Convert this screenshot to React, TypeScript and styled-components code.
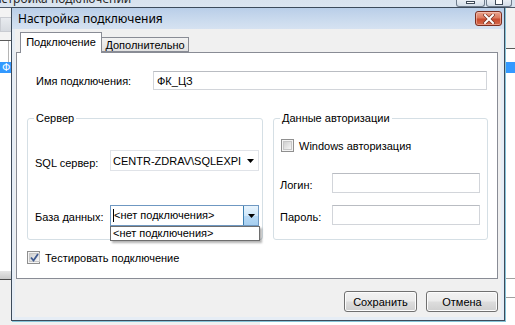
import React from "react";
import styled, { createGlobalStyle } from "styled-components";

const Global = createGlobalStyle`
  html, body { margin: 0; padding: 0; }
  body {
    width: 515px; height: 325px; overflow: hidden; background: #ececec;
    font-family: "Liberation Sans", Arial, sans-serif; font-size: 11px; color: #000;
  }
  * { box-sizing: border-box; }
`;

const Desktop = styled.div`
  position: relative;
  width: 515px;
  height: 325px;
  overflow: hidden;
  background: #ececec;
`;

/* ---------- background window ---------- */
const BackWindow = styled.div`
  position: absolute;
  inset: 0;
  display: flex;
  flex-direction: column;
`;

const BackTitle = styled.div`
  height: 8px;
  flex: none;
  display: flex;
  overflow: hidden;
  border-bottom: 1px solid #4d5867;
  background: linear-gradient(#d9e3ee, #dbe5f0);
`;

const BackTitleText = styled.div`
  font-family: "Noto Sans", sans-serif;
  font-size: 12px;
  line-height: 16px;
  margin-top: -9px;
  margin-left: -14px;
  color: #2a2a2a;
  white-space: nowrap;
`;

const CaptionButtons = styled.div`
  margin-left: auto;
  margin-right: 3px;
  display: flex;
  gap: 1px;
  height: 7px;
`;

const CaptionButton = styled.div<{ $w: number }>`
  width: ${(p) => p.$w}px;
  height: 7px;
  border: 1px solid #6f7c8c;
  border-top: none;
  border-radius: 0 0 3px 3px;
  background: linear-gradient(#e9eef4, #d3dde8);
  display: flex;
  justify-content: center;
  align-items: flex-start;
`;

const MinGlyph = styled.div`
  width: 9px;
  height: 3px;
  margin-top: 1px;
  background: #fff;
  border: 1px solid #3e4a58;
`;

const MaxGlyph = styled.div`
  width: 8px;
  height: 5px;
  border: 1px solid #3e4a58;
  border-top: none;
  background: #fff;
`;

const BackBody = styled.div`
  flex: 1;
  display: flex;
`;

const Pane = styled.div<{ $w?: number }>`
  ${(p) => (p.$w ? `width: ${p.$w}px; flex: none;` : "flex: 1;")}
  display: flex;
  flex-direction: column;
  background: #fff;
`;

const PaneToolbar = styled.div<{ $h: number }>`
  height: ${(p) => p.$h}px;
  flex: none;
  border-bottom: 1px solid #5a5a5a;
  background: #f3f3f3;
  display: flex;
  align-items: center;
`;

const ToolItem = styled.div`
  width: 12px;
  height: 15px;
  margin-top: 1px;
  border: 1px solid #c9ccd2;
  background: linear-gradient(#e8ebef, #d6dae0);
`;

const GridHeader = styled.div<{ $h: number }>`
  height: ${(p) => p.$h}px;
  flex: none;
  display: flex;
  background: #fff;
`;

const RowHeaderCell = styled.div`
  width: 9px;
  border-right: 1px solid #b5b5b5;
`;

const SelectedRow = styled.div`
  height: 11px;
  flex: none;
  background: #3399ff;
  color: #fff;
  font-size: 11px;
  line-height: 11px;
  padding-left: 2px;
  white-space: nowrap;
  overflow: hidden;
`;

const GridFill = styled.div`
  flex: 1;
  background: #fff;
`;

const HScroll = styled.div`
  height: 9px;
  flex: none;
  background: linear-gradient(#e6e6e6, #c9c9c9);
  border-bottom: 1px solid #4a4a4a;
`;

const GreyFill = styled.div<{ $h?: number }>`
  ${(p) => (p.$h ? `height: ${p.$h}px; flex: none;` : "flex: 1;")}
  background: #f0f0f0;
`;

const LinedRow = styled.div<{ $h: number }>`
  height: ${(p) => p.$h}px;
  flex: none;
  border-top: 1px solid #a0a0a0;
  background: #fff;
  padding-left: 1px;
  font-size: 11px;
  line-height: 14px;
  white-space: nowrap;
  overflow: hidden;
`;

/* ---------- dialog ---------- */
const Dialog = styled.div`
  position: absolute;
  left: 11px;
  top: 7px;
  width: 494px;
  height: 314px;
  border: 1px solid #3d4b5b;
  box-shadow: 1px 1px 0 #86c3d8;
  background: #e6edf5;
  display: flex;
  flex-direction: column;
`;

const TitleBar = styled.div`
  height: 21px;
  flex: none;
  display: flex;
  align-items: center;
  padding-left: 6px;
  padding-right: 2px;
  background: linear-gradient(#b9cee8, #cbdbee 60%, #d6e2f1);
`;

const TitleText = styled.div`
  font-family: "Noto Sans", sans-serif;
  font-size: 12px;
  color: #000;
  flex: 1;
`;

const CloseButton = styled.div`
  width: 27px;
  height: 15px;
  border: 1px solid #7a2e20;
  border-radius: 3px;
  background: linear-gradient(#e9a58f, #dc7a5e 45%, #c84a2e 55%, #d46a4c);
  display: flex;
  align-items: center;
  justify-content: center;
  box-shadow: inset 0 0 0 1px rgba(255, 210, 200, 0.5);
`;

const Client = styled.div`
  flex: 1;
  margin: 0 3px 3px 3px;
  background: #f0f0f0;
  display: flex;
  flex-direction: column;
`;

const TabStrip = styled.div`
  margin-top: 3px;
  margin-left: 5px;
  height: 20px;
  display: flex;
  align-items: flex-end;
  position: relative;
  z-index: 1;
`;

const Tab = styled.div<{ $active?: boolean; $w: number }>`
  width: ${(p) => p.$w}px;
  height: ${(p) => (p.$active ? 21 : 15)}px;
  border: 1px solid #898c95;
  border-bottom: ${(p) => (p.$active ? "none" : "1px solid #898c95")};
  ${(p) => (!p.$active ? "border-left: none;" : "margin-bottom: -1px;")}
  background: ${(p) => (p.$active ? "#fff" : "linear-gradient(#f2f2f2, #e1e1e1)")};
  display: flex;
  align-items: center;
  justify-content: center;
  padding-bottom: ${(p) => (p.$active ? 2 : 0)}px;
  font-size: 11px;
  white-space: nowrap;
`;

const TabPanel = styled.div`
  margin-left: 1px;
  width: 482px;
  height: 227px;
  border: 1px solid #898c95;
  background: #fff;
  display: flex;
  flex-direction: column;
`;

const NameRow = styled.div`
  margin-top: 18px;
  padding-left: 19px;
  display: flex;
  align-items: center;
`;

const Label = styled.div<{ $w: number; $dy?: number }>`
  width: ${(p) => p.$w}px;
  flex: none;
  font-size: 11px;
  white-space: nowrap;
  position: relative;
  top: ${(p) => p.$dy ?? 0}px;
`;

const TextBox = styled.div<{ $w: number; $h?: number }>`
  width: ${(p) => p.$w}px;
  height: ${(p) => p.$h ?? 20}px;
  border: 1px solid #d2d5da;
  border-top-color: #b9bcc2;
  background: #fff;
  font-size: 11px;
  display: flex;
  align-items: center;
  padding-left: 3px;
`;

const GroupsRow = styled.div`
  margin-top: 21px;
  margin-left: 10px;
  display: flex;
  gap: 10px;
`;

const Group = styled.fieldset<{ $w: number }>`
  width: ${(p) => p.$w}px;
  height: 129px;
  margin: 0;
  padding: 0;
  min-width: 0;
  border: 1px solid #d5dfe5;
  border-radius: 3px;
  display: flex;
  flex-direction: column;
`;

const Legend = styled.legend`
  margin-left: 6px;
  padding: 0 2px;
  font-size: 11px;
  line-height: 14px;
`;

const FieldRow = styled.div<{ $mt: number; $pl: number }>`
  margin-top: ${(p) => p.$mt}px;
  padding-left: ${(p) => p.$pl}px;
  display: flex;
  align-items: center;
`;

const Combo = styled.div<{ $w: number; $focused?: boolean }>`
  position: relative;
  width: ${(p) => p.$w}px;
  height: 21px;
  border: 1px solid ${(p) => (p.$focused ? "#6f98c2" : "#e0e3e8")};
  background: #fff;
  display: flex;
  align-items: center;
  font-size: 11px;
`;

const ComboText = styled.div`
  flex: 1;
  padding-left: 2px;
  white-space: nowrap;
  overflow: hidden;
`;

const Caret = styled.span`
  display: inline-block;
  width: 1px;
  height: 13px;
  background: #000;
  vertical-align: middle;
`;

const ArrowPlain = styled.div`
  width: 16px;
  height: 19px;
  display: flex;
  align-items: center;
  justify-content: center;
`;

const ArrowButton = styled.div`
  width: 15px;
  height: 19px;
  border-left: 1px solid #3c7fb1;
  background: linear-gradient(#e8f4fd, #cfe7fa 50%, #b7d9f6 52%, #a7cfef);
  display: flex;
  align-items: center;
  justify-content: center;
`;

const DropList = styled.div`
  position: absolute;
  left: -1px;
  top: 20px;
  width: 150px;
  height: 15px;
  border: 1px solid #6e6e6e;
  background: #fff;
  box-shadow: 2px 2px 2px rgba(0, 0, 0, 0.3);
  padding-left: 2px;
  font-size: 11px;
  line-height: 13px;
  white-space: nowrap;
  z-index: 5;
`;

const CheckRow = styled.label<{ $mt: number; $pl: number }>`
  margin-top: ${(p) => p.$mt}px;
  padding-left: ${(p) => p.$pl}px;
  display: flex;
  align-items: center;
  gap: 5px;
  font-size: 11px;
  white-space: nowrap;
`;

const CheckBox = styled.div`
  width: 13px;
  height: 13px;
  flex: none;
  border: 1px solid #8f8f8f;
  background: #f4f4f4;
  padding: 1px;
  display: flex;
`;

const CheckInner = styled.div`
  flex: 1;
  border: 1px solid #c7c7c7;
  background: linear-gradient(135deg, #cfcfcf, #f6f6f6);
  display: flex;
  align-items: center;
  justify-content: center;
`;

const ButtonRow = styled.div`
  margin-top: 12px;
  margin-right: 3px;
  display: flex;
  justify-content: flex-end;
  gap: 9px;
`;

const Button = styled.div<{ $w: number }>`
  width: ${(p) => p.$w}px;
  height: 21px;
  border: 1px solid #707070;
  border-radius: 3px;
  background: linear-gradient(#f2f2f2, #ebebeb 48%, #dddddd 52%, #cfcfcf);
  box-shadow: inset 0 0 0 1px #fcfcfc;
  display: flex;
  align-items: center;
  justify-content: center;
  font-size: 11px;
`;

const Arrow = () => (
  <svg width="7" height="4" viewBox="0 0 7 4">
    <path d="M0 0H7L3.5 4Z" fill="#000" />
  </svg>
);

const Check = () => (
  <svg width="9" height="9" viewBox="0 0 9 9">
    <path d="M1 4.5L3.5 7.5L8 1" fill="none" stroke="#3f5a90" strokeWidth="1.8" />
  </svg>
);

const CloseX = () => (
  <svg width="12" height="10" viewBox="0 0 12 10">
    <path d="M2 1L10 9M10 1L2 9" stroke="#7a3526" strokeWidth="3.4" strokeLinecap="square" />
    <path d="M2 1L10 9M10 1L2 9" stroke="#fff" strokeWidth="2" strokeLinecap="square" />
  </svg>
);

export default function App() {
  return (
    <>
      <Global />
      <Desktop>
        <BackWindow>
          <BackTitle>
            <BackTitleText>Настройка подключений</BackTitleText>
            <CaptionButtons>
              <CaptionButton $w={29}>
                <MinGlyph />
              </CaptionButton>
              <CaptionButton $w={26}>
                <MaxGlyph />
              </CaptionButton>
            </CaptionButtons>
          </BackTitle>
          <BackBody>
            <Pane $w={260}>
              <PaneToolbar $h={33}>
                <ToolItem />
              </PaneToolbar>
              <GridHeader $h={21}>
                <RowHeaderCell />
              </GridHeader>
              <SelectedRow>Ф</SelectedRow>
              <GridFill />
              <HScroll />
              <GreyFill $h={45} />
            </Pane>
            <Pane>
              <PaneToolbar $h={41} />
              <GridHeader $h={13} />
              <SelectedRow>...</SelectedRow>
              <GridFill />
              <LinedRow $h={19} />
              <LinedRow $h={28}>на</LinedRow>
            </Pane>
          </BackBody>
        </BackWindow>

        <Dialog>
          <TitleBar>
            <TitleText>Настройка подключения</TitleText>
            <CloseButton>
              <CloseX />
            </CloseButton>
          </TitleBar>
          <Client>
            <TabStrip>
              <Tab $active $w={82}>Подключение</Tab>
              <Tab $w={87}>Дополнительно</Tab>
            </TabStrip>
            <TabPanel>
              <NameRow>
                <Label $w={117}>Имя подключения:</Label>
                <TextBox $w={334} $h={19}>ФК_ЦЗ</TextBox>
              </NameRow>
              <GroupsRow>
                <Group $w={236}>
                  <Legend>Сервер</Legend>
                  <FieldRow $mt={25} $pl={7}>
                    <Label $w={75} $dy={2}>SQL сервер:</Label>
                    <Combo $w={149}>
                      <ComboText>CENTR-ZDRAV\SQLEXPI</ComboText>
                      <ArrowPlain>
                        <Arrow />
                      </ArrowPlain>
                    </Combo>
                  </FieldRow>
                  <FieldRow $mt={34} $pl={7}>
                    <Label $w={75} $dy={1}>База данных:</Label>
                    <Combo $w={149} $focused>
                      <ComboText>
                        <Caret />
                        &lt;нет подключения&gt;
                      </ComboText>
                      <ArrowButton>
                        <Arrow />
                      </ArrowButton>
                      <DropList>&lt;нет подключения&gt;</DropList>
                    </Combo>
                  </FieldRow>
                </Group>
                <Group $w={215}>
                  <Legend>Данные авторизации</Legend>
                  <CheckRow $mt={14} $pl={7}>
                    <CheckBox>
                      <CheckInner />
                    </CheckBox>
                    Windows авторизация
                  </CheckRow>
                  <FieldRow $mt={21} $pl={6}>
                    <Label $w={52} $dy={2}>Логин:</Label>
                    <TextBox $w={148} />
                  </FieldRow>
                  <FieldRow $mt={12} $pl={6}>
                    <Label $w={52} $dy={2}>Пароль:</Label>
                    <TextBox $w={148} />
                  </FieldRow>
                </Group>
              </GroupsRow>
              <CheckRow $mt={11} $pl={10}>
                <CheckBox>
                  <CheckInner>
                    <Check />
                  </CheckInner>
                </CheckBox>
                Тестировать подключение
              </CheckRow>
            </TabPanel>
            <ButtonRow>
              <Button $w={73}>Сохранить</Button>
              <Button $w={72}>Отмена</Button>
            </ButtonRow>
          </Client>
        </Dialog>
      </Desktop>
    </>
  );
}
